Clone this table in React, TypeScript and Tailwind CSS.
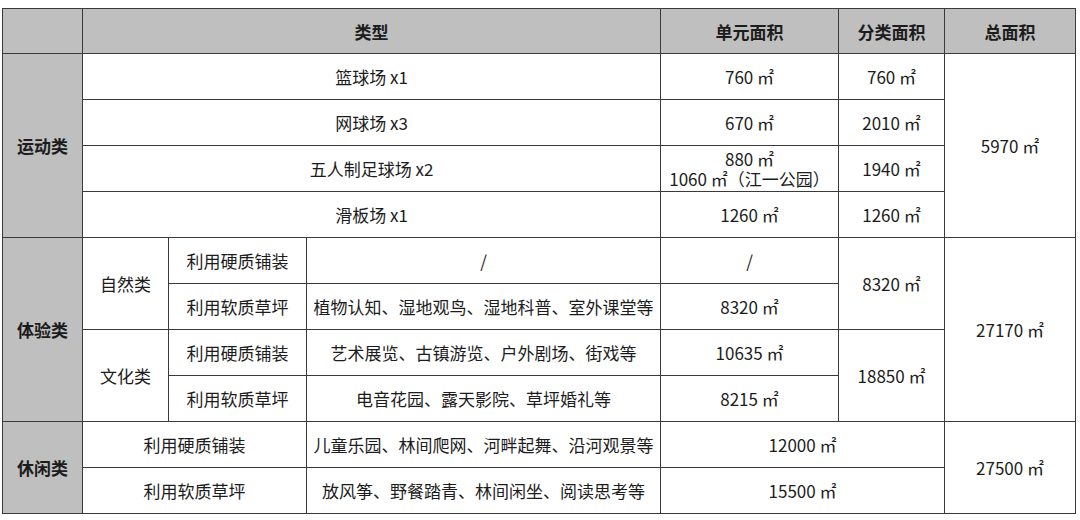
import React from "react";

const B = "border border-[#3a3a3a]";
const G = "bg-[#bfbfbf]";
const td = `${B} text-center align-middle p-0 whitespace-nowrap`;

export default function App() {
  return (
    <div
      className="w-[1080px] h-[520px] bg-white pt-[8px] pl-[2px] text-[#1c1c1c]"
      style={{ fontFamily: '"Noto Sans CJK SC", "Noto Sans", sans-serif' }}
    >
      <table className="border-collapse table-fixed text-[17px] leading-[21px] w-[1073px]">
        <colgroup>
          <col className="w-[80px]" />
          <col className="w-[86px]" />
          <col className="w-[138px]" />
          <col className="w-[354px]" />
          <col className="w-[178px]" />
          <col className="w-[106px]" />
          <col className="w-[131px]" />
        </colgroup>
        <tbody>
          <tr className="h-[45px] font-bold">
            <td className={`${td} ${G}`}></td>
            <td className={`${td} ${G}`} colSpan={3}>类型</td>
            <td className={`${td} ${G}`}>单元面积</td>
            <td className={`${td} ${G}`}>分类面积</td>
            <td className={`${td} ${G}`}>总面积</td>
          </tr>
          <tr className="h-[46px]">
            <td className={`${td} ${G} font-bold`} rowSpan={4}>运动类</td>
            <td className={td} colSpan={3}>篮球场 x1</td>
            <td className={td}>760 ㎡</td>
            <td className={td}>760 ㎡</td>
            <td className={td} rowSpan={4}>5970 ㎡</td>
          </tr>
          <tr className="h-[46px]">
            <td className={td} colSpan={3}>网球场 x3</td>
            <td className={td}>670 ㎡</td>
            <td className={td}>2010 ㎡</td>
          </tr>
          <tr className="h-[46px]">
            <td className={td} colSpan={3}>五人制足球场 x2</td>
            <td className={`${td} leading-[20px]`}>
              <div>880 ㎡</div>
              <div>1060 ㎡（江一公园）</div>
            </td>
            <td className={td}>1940 ㎡</td>
          </tr>
          <tr className="h-[46px]">
            <td className={td} colSpan={3}>滑板场 x1</td>
            <td className={td}>1260 ㎡</td>
            <td className={td}>1260 ㎡</td>
          </tr>
          <tr className="h-[46px]">
            <td className={`${td} ${G} font-bold`} rowSpan={4}>体验类</td>
            <td className={td} rowSpan={2}>自然类</td>
            <td className={td}>利用硬质铺装</td>
            <td className={td}>/</td>
            <td className={td}>/</td>
            <td className={td} rowSpan={2}>8320 ㎡</td>
            <td className={td} rowSpan={4}>27170 ㎡</td>
          </tr>
          <tr className="h-[46px]">
            <td className={td}>利用软质草坪</td>
            <td className={td}>植物认知、湿地观鸟、湿地科普、室外课堂等</td>
            <td className={td}>8320 ㎡</td>
          </tr>
          <tr className="h-[46px]">
            <td className={td} rowSpan={2}>文化类</td>
            <td className={td}>利用硬质铺装</td>
            <td className={td}>艺术展览、古镇游览、户外剧场、街戏等</td>
            <td className={td}>10635 ㎡</td>
            <td className={td} rowSpan={2}>18850 ㎡</td>
          </tr>
          <tr className="h-[46px]">
            <td className={td}>利用软质草坪</td>
            <td className={td}>电音花园、露天影院、草坪婚礼等</td>
            <td className={td}>8215 ㎡</td>
          </tr>
          <tr className="h-[46px]">
            <td className={`${td} ${G} font-bold`} rowSpan={2}>休闲类</td>
            <td className={td} colSpan={2}>利用硬质铺装</td>
            <td className={td}>儿童乐园、林间爬网、河畔起舞、沿河观景等</td>
            <td className={td} colSpan={2}>12000 ㎡</td>
            <td className={td} rowSpan={2}>27500 ㎡</td>
          </tr>
          <tr className="h-[46px]">
            <td className={td} colSpan={2}>利用软质草坪</td>
            <td className={td}>放风筝、野餐踏青、林间闲坐、阅读思考等</td>
            <td className={td} colSpan={2}>15500 ㎡</td>
          </tr>
        </tbody>
      </table>
    </div>
  );
}
